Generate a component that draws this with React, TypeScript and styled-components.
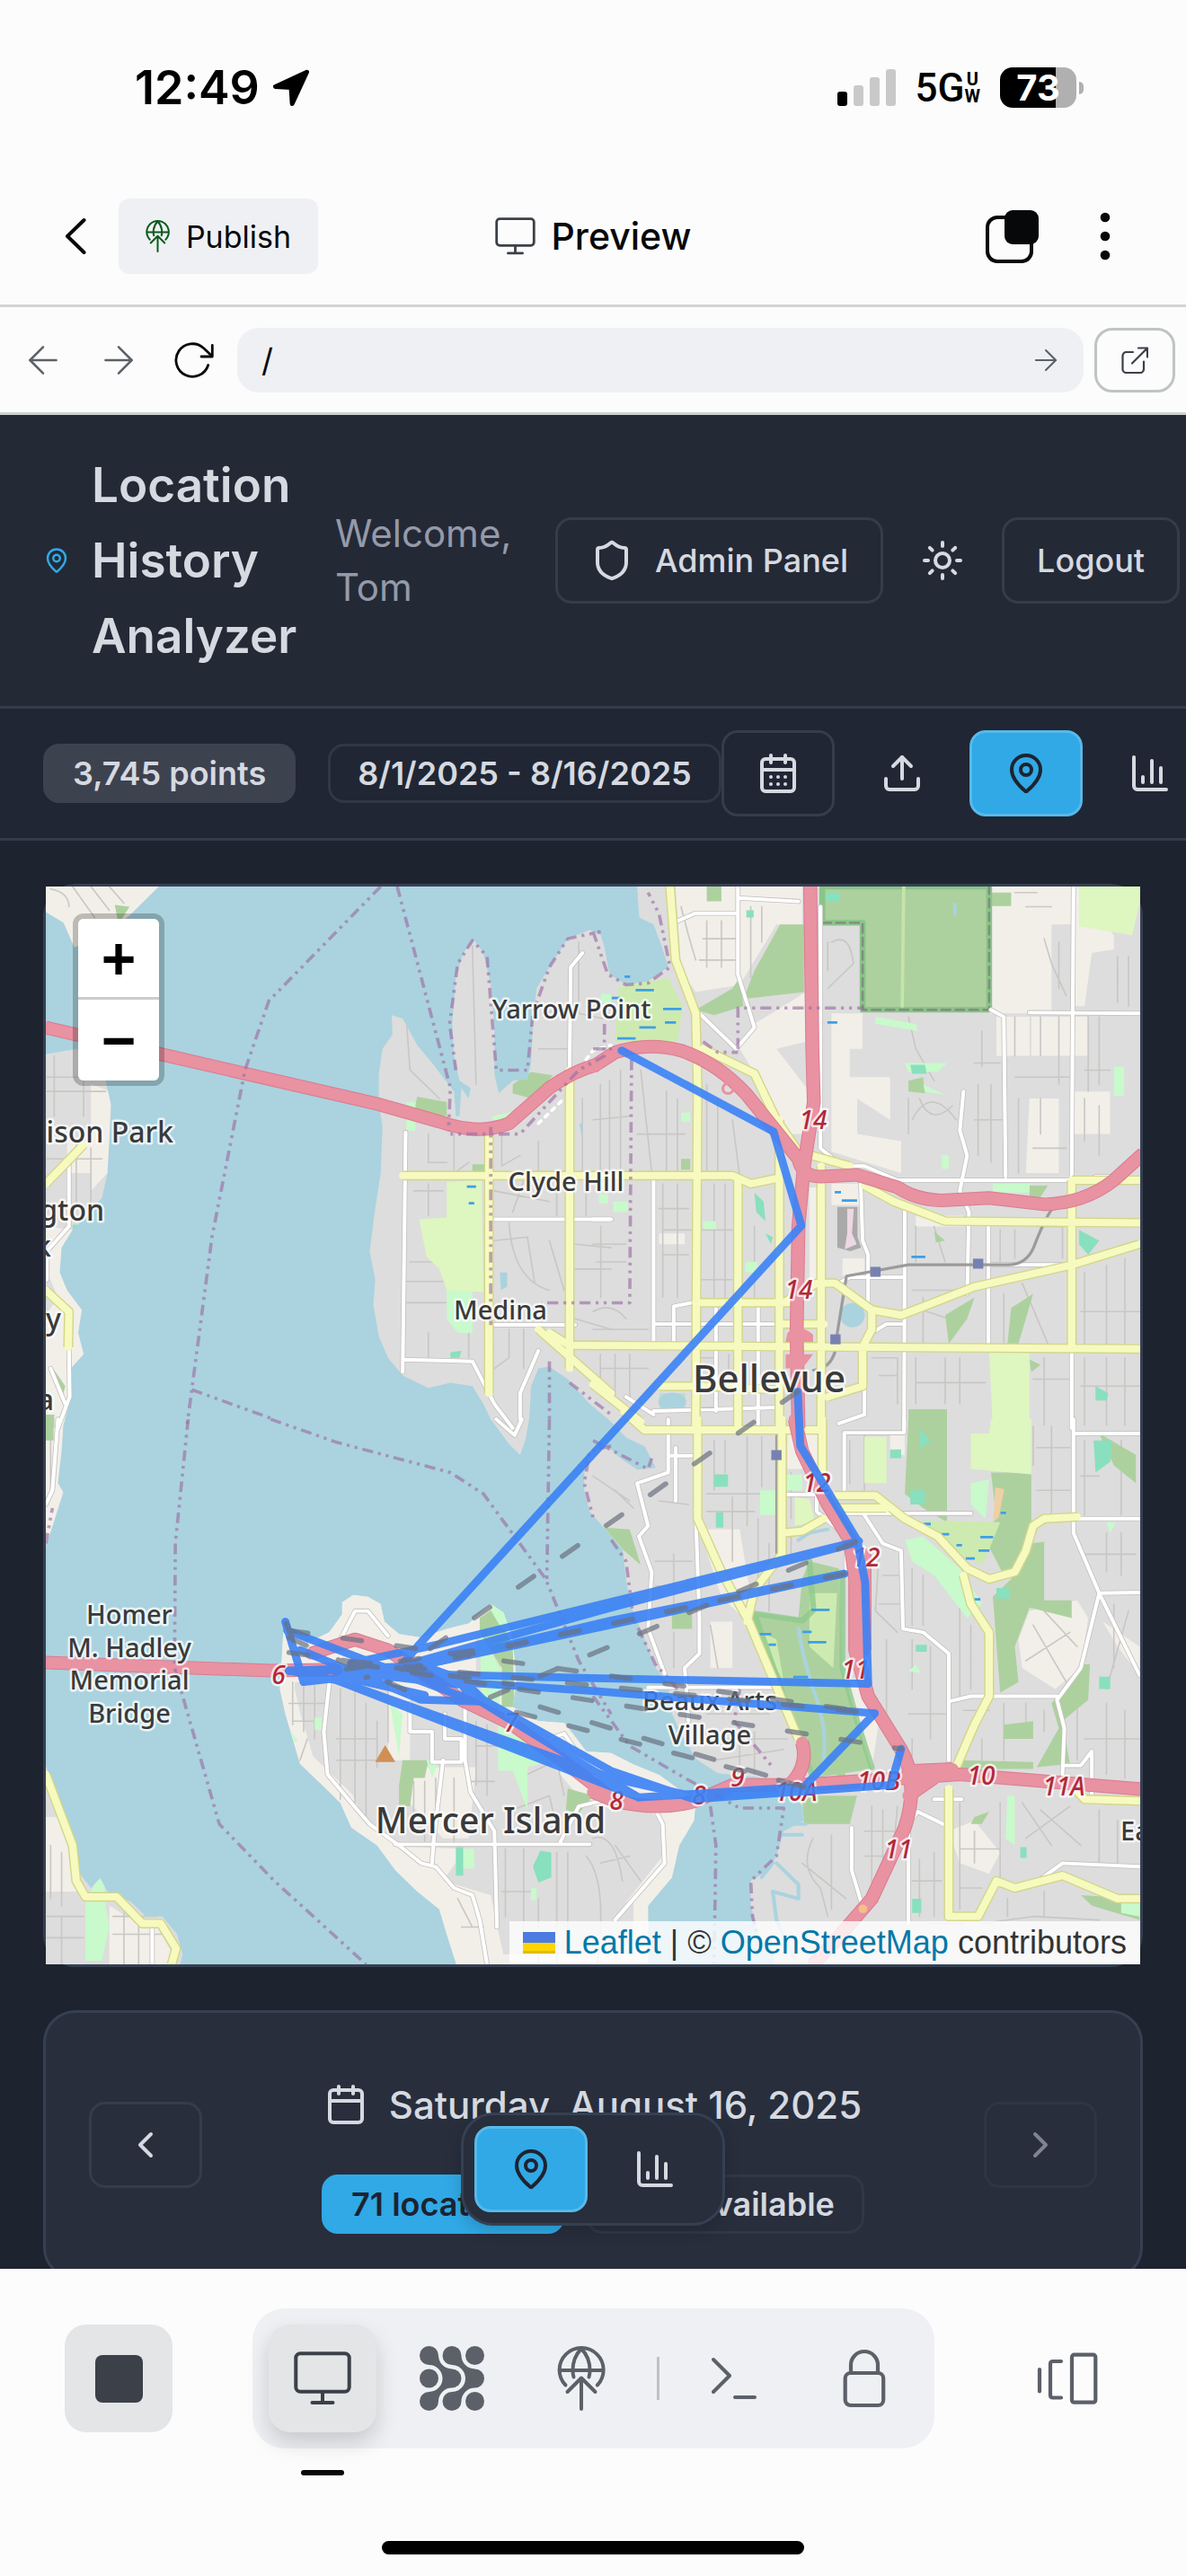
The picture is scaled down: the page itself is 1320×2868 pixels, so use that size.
import React from "react";
import styled, { createGlobalStyle, css } from "styled-components";
import {
  ArrowLeft,
  ArrowRight,
  Calendar,
  CalendarDays,
  ChartColumn,
  ChevronLeft,
  ChevronRight,
  MapPin,
  Shield,
  Sun,
  Upload,
} from "lucide-react";

/* ---------- theme ---------- */

const c = {
  chrome: "#fcfcfd",
  chromeFill: "#eff0f3",
  chromeActive: "#e4e5e7",
  ink: "#07080a",
  slate: "#3c4048",
  grey: "#5c6068",
  rule: "#d4d4d4",
  page: "#1e2330",
  header: "#242936",
  toolbar: "#202633",
  card: "#282e3c",
  line: "#354052",
  softLine: "#363c4a",
  text: "#d5d9e0",
  muted: "#949aa9",
  accent: "#30a9e6",
  accentLine: "#57b9ea",
};

const Global = createGlobalStyle`
  *, *::before, *::after { box-sizing: border-box; }
  body { margin: 0; background: ${c.chrome}; font-family: Inter, "Liberation Sans", sans-serif; }
  button, input { font: inherit; color: inherit; }
  svg { display: block; flex: none; }
`;

/* ---------- phone and browser chrome ---------- */

const Screen = styled.div`
  display: flex;
  flex-direction: column;
  height: 100vh;
  overflow: hidden;
  background: ${c.chrome};
`;

const StatusBar = styled.header`
  display: flex;
  align-items: center;
  justify-content: space-between;
  flex: none;
  height: 187px;
  padding: 8px 114px 0 150px;
  color: #000;
`;

const StatusGroup = styled.div<{ $gap: number }>`
  display: flex;
  align-items: center;
  gap: ${(p) => p.$gap}px;
`;

const Clock = styled.time`
  font-size: 52px;
  line-height: 60px;
  font-weight: 600;
`;

const Network = styled.span`
  display: flex;
  align-items: center;
  font-size: 44px;
  line-height: 48px;
  font-weight: 500;
  font-family: Roboto, sans-serif;
`;

const NetworkStack = styled.span`
  display: flex;
  flex-direction: column;
  align-items: center;
  font-size: 20px;
  line-height: 19px;
  font-weight: 700;
`;

const Battery = styled.span`
  display: flex;
  align-items: center;
  gap: 3px;
  &::after {
    content: "";
    width: 5px;
    height: 14px;
    border-radius: 0 5px 5px 0;
    background: #b0b0b0;
  }
`;

const BatteryBody = styled.span`
  width: 85px;
  height: 45px;
  border-radius: 14px;
  background: linear-gradient(90deg, #000 73%, #b0b0b0 73%);
  color: #fff;
  font-size: 40px;
  line-height: 45px;
  font-weight: 700;
  text-align: center;
`;

const plain = css`
  display: flex;
  align-items: center;
  justify-content: center;
  flex: none;
  padding: 0;
  border: 0;
  background: none;
  cursor: pointer;
`;

const NavBar = styled.nav`
  display: grid;
  grid-template-columns: 1fr auto 1fr;
  align-items: center;
  flex: none;
  height: 155px;
  padding: 0 60px 0 54px;
  border-bottom: 3px solid ${c.rule};
  color: ${c.ink};
`;

const NavSide = styled.div<{ $end?: boolean }>`
  display: flex;
  align-items: center;
  gap: ${(p) => (p.$end ? 44 : 18)}px;
  justify-content: ${(p) => (p.$end ? "flex-end" : "flex-start")};
`;

const NavButton = styled.button`
  ${plain}
  width: 60px;
  height: 84px;
`;

const Publish = styled.button`
  ${plain}
  gap: 18px;
  width: 222px;
  height: 84px;
  border-radius: 12px;
  background: ${c.chromeFill};
  font-size: 34px;
`;

const PublishIcon = styled.span`
  color: #0b5a1c;
`;

const NavTitle = styled.h1`
  display: flex;
  align-items: center;
  gap: 18px;
  margin: 0;
  padding-left: 6px;
  font-size: 41px;
  line-height: 48px;
  font-weight: 500;
  svg {
    color: ${c.slate};
  }
`;

const AddressBar = styled.form`
  display: flex;
  align-items: center;
  flex: none;
  height: 120px;
  padding: 0 12px 0 6px;
  border-bottom: 3px solid #cdd2d0;
  color: ${c.grey};
`;

const AddressButton = styled.button<{ $dark?: boolean }>`
  ${plain}
  width: 84px;
  height: 72px;
  color: ${(p) => (p.$dark ? c.ink : c.grey)};
`;

const AddressField = styled.div`
  display: flex;
  flex: 1;
  min-width: 0;
  height: 72px;
  margin: 0 12px 0 6px;
  border-radius: 24px;
  background: ${c.chromeFill};
`;

const AddressInput = styled.input`
  flex: 1;
  min-width: 0;
  padding: 0 0 0 27px;
  border: 0;
  outline: 0;
  background: none;
  color: ${c.ink};
  font-size: 36px;
`;

const OpenButton = styled.button`
  ${plain}
  width: 90px;
  height: 72px;
  border: 3px solid #bfc4c3;
  border-radius: 20px;
  color: ${c.slate};
`;

/* ---------- the previewed site ---------- */

const Preview = styled.main`
  position: relative;
  flex: 1;
  min-height: 0;
  overflow: hidden;
  background: ${c.page};
  color: ${c.text};
`;

const SiteHeader = styled.header`
  display: flex;
  align-items: center;
  padding: 36px 0 36px 48px;
  border-bottom: 3px solid #353b4c;
  background: ${c.header};
`;

const Brand = styled.div`
  display: flex;
  align-items: center;
  flex: none;
  gap: 24px;
  width: 325px;
  color: ${c.accent};
`;

const BrandName = styled.h2`
  margin: 0;
  width: min-content;
  color: ${c.text};
  font-size: 53px;
  line-height: 84px;
  font-weight: 600;
`;

const Welcome = styled.p`
  flex: none;
  width: 245px;
  margin: 0;
  padding-right: 48px;
  color: ${c.muted};
  font-size: 42px;
  line-height: 60px;
`;

const ButtonRow = styled.div`
  display: flex;
  align-items: center;
  flex: none;
  gap: 12px;
`;

type Tone = "outline" | "ghost" | "accent";

const tones = {
  outline: css`
    border-color: ${c.softLine};
  `,
  ghost: css`
    border-color: transparent;
  `,
  accent: css`
    border-color: ${c.accentLine};
    background: ${c.accent};
    color: ${c.page};
  `,
};

const Button = styled.button<{ $tone: Tone; $width?: number }>`
  display: flex;
  align-items: center;
  justify-content: center;
  flex: none;
  gap: 24px;
  width: ${(p) => (p.$width ? `${p.$width}px` : "auto")};
  height: 96px;
  padding: 0 36px;
  border: 3px solid;
  border-radius: 18px;
  background: none;
  color: ${c.text};
  font-size: 36px;
  font-weight: 500;
  white-space: nowrap;
  cursor: pointer;
  ${(p) => tones[p.$tone]}
  &:disabled {
    opacity: 0.5;
  }
`;

const Toolbar = styled.div`
  display: flex;
  align-items: center;
  height: 147px;
  padding-left: 48px;
  border-bottom: 3px solid #353b4c;
  background: ${c.toolbar};
`;

const BadgeRow = styled.div<{ $gap: number }>`
  display: flex;
  flex: none;
  gap: ${(p) => p.$gap}px;
`;

const badgeTones = {
  soft: css`
    border-color: transparent;
    background: #3d424f;
    background-clip: border-box;
  `,
  outline: css`
    border-color: #313745;
  `,
  accent: css`
    border-color: ${c.accent};
    background: ${c.accent};
    color: ${c.page};
  `,
};

const Badge = styled.span<{ $tone: "soft" | "outline" | "accent" }>`
  flex: none;
  height: 66px;
  padding: 0 30px;
  border: 3px solid;
  border-radius: 18px;
  font-size: 36px;
  line-height: 60px;
  font-weight: 600;
  white-space: nowrap;
  ${(p) => badgeTones[p.$tone]}
`;

const Content = styled.div`
  display: flex;
  flex-direction: column;
  gap: 48px;
  padding: 48px;
`;

const MapFrame = styled.section`
  position: relative;
  border: 3px solid ${c.line};
  border-radius: 36px;
`;

const MapArt = styled.svg`
  width: 100%;
  height: auto;
`;

const ZoomControl = styled.div`
  position: absolute;
  top: 30px;
  left: 30px;
  display: flex;
  flex-direction: column;
  border: 6px solid rgba(0, 0, 0, 0.22);
  border-radius: 12px;
  background-clip: padding-box;
`;

const ZoomButton = styled.button`
  ${plain}
  width: 90px;
  height: 90px;
  background: #fff;
  color: #000;
  font: bold 66px/84px "Liberation Sans", sans-serif;
  &:first-child {
    border-bottom: 3px solid #ccc;
    border-radius: 6px 6px 0 0;
  }
  &:last-child {
    border-radius: 0 0 6px 6px;
  }
`;

const Attribution = styled.footer`
  position: absolute;
  right: 0;
  bottom: 0;
  display: flex;
  align-items: center;
  gap: 10px;
  height: 48px;
  padding: 0 15px;
  background: rgba(255, 255, 255, 0.8);
  color: #333;
  font: 36px/48px "Liberation Sans", sans-serif;
  a {
    color: #0078a8;
    text-decoration: none;
  }
`;

const Flag = styled.svg`
  width: 36px;
  height: 24px;
`;

const DayCard = styled.section`
  display: flex;
  align-items: center;
  justify-content: space-between;
  padding: 48px;
  border: 3px solid ${c.line};
  border-radius: 36px;
  background: ${c.card};
`;

const DayInfo = styled.div`
  display: flex;
  flex-direction: column;
  align-items: center;
  gap: 24px;
`;

const DayTitle = styled.h3`
  display: flex;
  align-items: center;
  gap: 24px;
  height: 108px;
  margin: 0;
  font-size: 42px;
  font-weight: 500;
`;

const FloatingSwitch = styled.div`
  position: absolute;
  bottom: 48px;
  left: 50%;
  display: flex;
  gap: 12px;
  padding: 12px;
  border: 3px solid ${c.line};
  border-radius: 36px;
  background: ${c.card};
  box-shadow: 0 6px 18px rgba(0, 0, 0, 0.16);
  transform: translateX(-50%);
`;

/* ---------- bottom bar ---------- */

const Dock = styled.footer`
  display: flex;
  flex-direction: column;
  align-items: center;
  flex: none;
  padding: 44px 0 24px;
`;

const DockRow = styled.div`
  display: flex;
  align-items: center;
  justify-content: space-between;
  width: 100%;
  padding: 0 72px;
  color: ${c.grey};
`;

const DockGroup = styled.div`
  display: flex;
  align-items: center;
  gap: 24px;
  padding: 18px;
  border-radius: 36px;
  background: ${c.chromeFill};
`;

const DockButton = styled.button<{ $filled?: boolean; $active?: boolean }>`
  ${plain}
  position: relative;
  width: 120px;
  height: 120px;
  border-radius: 24px;
  ${(p) =>
    (p.$filled || p.$active) &&
    css`
      background: ${c.chromeActive};
      color: ${c.slate};
    `}
  ${(p) =>
    p.$active &&
    css`
      box-shadow: 0 12px 24px rgba(0, 0, 0, 0.16);
      &::after {
        content: "";
        position: absolute;
        bottom: -48px;
        left: 36px;
        right: 36px;
        height: 6px;
        border-radius: 3px;
        background: ${c.ink};
      }
    `}
`;

const StopSquare = styled.span`
  width: 53px;
  height: 53px;
  border-radius: 8px;
  background: ${c.slate};
`;

const DockDivider = styled.span`
  width: 3px;
  height: 48px;
  background: #bfc1c5;
`;

const HomeBar = styled.div`
  width: 470px;
  max-width: 60%;
  height: 15px;
  margin-top: 103px;
  border-radius: 8px;
  background: #000;
`;

/* ---------- icons ---------- */

const line = {
  fill: "none",
  stroke: "currentColor",
  strokeLinecap: "round" as const,
  strokeLinejoin: "round" as const,
};

const GlobeUp = ({ width, height }: { width: number; height: number }) => (
  <svg width={width} height={height} viewBox="0 0 54 72" {...line} strokeWidth={4}>
    <path d="M9.5 43.5A24.5 24.5 0 1 1 44.8 43.5M2.5 27H51.5M27 3C20 10 17.500 18 17.500 27Q17.500 31 18.500 34.500M27 3C34 10 36.500 18 36.500 27Q36.500 31 35.500 34.500" />
    <path d="M11.500 51 27 35.500 42.500 51M27 36V70" />
  </svg>
);

const Monitor = ({ width, height }: { width: number; height: number }) => (
  <svg width={width} height={height} viewBox="0 0 64 60" {...line} strokeWidth={4}>
    <rect x="2.300" y="2.300" width="59.400" height="42.500" rx="5" />
    <path d="M32 45V57M20.500 57H43.500" />
  </svg>
);

const Reload = () => (
  <svg width="45" height="40" viewBox="0 0 45 40" {...line} strokeWidth={2.8}>
    <path d="M37.700 25.500A18.300 18.300 0 1 1 32.500 6.500L42 15.500M42.300 3.500V16H30" />
  </svg>
);

const OpenOut = () => (
  <svg width="30" height="30" viewBox="0 0 30 30" {...line} strokeWidth={2.2}>
    <path d="M13 6H5.500A4 4 0 0 0 1.500 10V25A4 4 0 0 0 5.500 29H21A4 4 0 0 0 25 25V16.500M12 18.500 29 1.500M19 1.500H29V11.500" />
  </svg>
);

const Duplicate = () => (
  <svg width="59" height="59" viewBox="0 0 59 59">
    <rect x="2" y="8" width="49" height="49" rx="11" fill="none" stroke="currentColor" strokeWidth="4" />
    <rect x="21" y="0" width="38" height="38" rx="9" fill="currentColor" />
  </svg>
);

const Dots = () => (
  <svg width="12" height="54" viewBox="0 0 12 54" fill="currentColor">
    <circle cx="6" cy="6" r="5.300" />
    <circle cx="6" cy="27" r="5.300" />
    <circle cx="6" cy="48" r="5.300" />
  </svg>
);

const Back = () => (
  <svg width="24" height="42" viewBox="0 0 24 42" {...line} strokeWidth={4}>
    <path d="M21.500 3 3 21 21.500 39" />
  </svg>
);

const Locator = () => (
  <svg width="42" height="42" viewBox="0 0 42 42" {...line} fill="currentColor" strokeWidth={5}>
    <path d="M38.500 3.200 3.500 19.500 21 20.500 22.200 38.500Z" />
  </svg>
);

const Signal = () => (
  <svg width="65" height="41" viewBox="0 0 65 41">
    <rect y="25" width="11" height="16" rx="3" />
    <rect x="18" y="18" width="11" height="23" rx="3" fill="#c9c9c9" />
    <rect x="36" y="9" width="11" height="32" rx="3" fill="#c9c9c9" />
    <rect x="54" y="0" width="11" height="41" rx="3" fill="#c9c9c9" />
  </svg>
);

const blob =
  "M10.500 0A10.500 10.500 0 0 1 21 10.500A15 15 0 0 0 36 25.500A10.500 10.500 0 0 1 36 46.500A15 15 0 0 0 21 61.500A10.500 10.500 0 1 1 10.500 51A15 15 0 0 0 10.500 21A10.500 10.500 0 0 1 10.500 0Z";

const Mesh = () => (
  <svg width="72" height="72" viewBox="0 0 72 72" fill="currentColor">
    <path d={blob} />
    <path d={blob} transform="translate(25.500 0)" />
    <circle cx="10.500" cy="36" r="10.500" />
    <circle cx="61.500" cy="10.500" r="10.500" />
    <circle cx="61.500" cy="61.500" r="10.500" />
  </svg>
);

const Prompt = () => (
  <svg width="52" height="52" viewBox="0 0 52 52" {...line} strokeWidth={4}>
    <path d="M2 5 20 23 2 41M26 47H48" />
  </svg>
);

const Padlock = () => (
  <svg width="50" height="68" viewBox="0 0 50 68" {...line} strokeWidth={4.2}>
    <rect x="3.700" y="28" width="42.500" height="36" rx="6" />
    <path d="M10 28V19A15 15 0 0 1 40 19V28" />
  </svg>
);

const Stack = () => (
  <svg width="68" height="58" viewBox="0 0 68 58" {...line} strokeWidth={4.2}>
    <path d="M3 19V43.500M27 10H18Q15 10 15 13V47.500Q15 50.500 18 50.500H27" />
    <rect x="39" y="2.700" width="26.300" height="53" rx="2.500" />
  </svg>
);

/* ---------- map ---------- */

/* Survey units: each sheet of the map has its own origin. */
const origin = { nw: "0 0", ne: "1519 0", sw: "0 1543", se: "1519 1543" };
type SheetId = keyof typeof origin;
type Sheets = Record<SheetId, string>;

const Sheet = ({ paths, ...rest }: { paths: Sheets } & Omit<React.SVGProps<SVGPathElement>, "paths">) => (
  <>
    {(Object.keys(origin) as SheetId[]).map((id) => (
      <path key={id} d={paths[id]} transform={`translate(${origin[id]})`} {...rest} />
    ))}
  </>
);

const eastShore =
  "M1639 43L1645 130 1684 150 1709 220 1724 270 1669 310 1609 320 1564 290 1549 210 1540 180 1510 165 1450 190 1400 270 1365 330 1355 430 1350 540 1340 585 1300 590 1262 625 1250 570 1250 430 1240 320 1220 230 1195 195 1165 230 1145 300 1135 430 1140 520 1155 590 1185 610 1180 640 1160 610 1155 690 1145 690 1140 620 1080 540 1040 490 1000 415 970 405 972 460 945 500 935 570 935 650 945 720 940 850 925 950 910 1070 925 1150 920 1220 935 1310 960 1370 1000 1420 1070 1455 1130 1440 1190 1450 1220 1500 1240 1543 1290 1613 1320 1643 1335 1600 1345 1540 1350 1450 1370 1400 1400 1395 1450 1430 1510 1500 1568 1550 1610 1595 1660 1620 1690 1680 1640 1685 1590 1650 1560 1620 1510 1633 1495 1693 1495 1743 1510 1803 1550 1850 1600 1910 1609 1993 1620 2063 1660 2163 1690 2243 1725 2290 1730 2363 1760 2430 1800 2500 1860 2540 1960 2550 2040 2570 2090 2633 2094 2673 2039 2703 2019 2773 1999 2813 1949 2843 1949 2913 1969 2993 2009 3043 2019 3090H3020V43Z";
const mercer =
  "M675 2133L740 2173 800 2143 835 2093 835 2058 865 2038 905 2043 940 2063 950 2113 990 2148 1050 2158 1120 2133 1180 2118 1240 2063 1275 2088 1300 2163 1310 2283 1300 2353 1370 2393 1440 2398 1475 2443 1500 2478 1568 2483 1630 2515 1700 2545 1799 2620 1794 2673 1754 2743 1734 2833 1669 2913 1669 3090H1150L1120 2993 1100 2923 1040 2873 980 2813 930 2743 860 2693 830 2623 780 2573 720 2513 700 2443 680 2373 665 2303Z";
const westLand =
  "M27 43H335L255 125 190 170 105 215 75 145 27 115ZM27 515L110 500 170 540 190 590 205 660 200 760 195 850 180 920 130 980 100 1010 70 1060 65 1130 85 1180 125 1235 115 1300 130 1360 95 1400 90 1500 75 1560 70 1633 60 1723 75 1750 40 1860 27 1900ZM27 2518L60 2613 110 2743 120 2823 150 2863 175 2835 195 2873 260 2903 300 2943 345 2943 385 2993 400 3050 390 3090H27Z";

const beige: Sheets = {
  nw: "M27 43H335L255 125 190 170 105 215 75 145 27 115ZM150 600L205 620 200 760 195 850 150 900ZM85 760H150V850H85ZM27 1000L100 1010 70 1060 65 1130 85 1180 125 1235 130 1360 95 1400 90 1500 75 1560H27V1250L60 1200 27 1120Z",
  ne: "M225 43H570V150H500L400 320 280 340 240 280ZM310 130H390V270H310ZM440 430L580 340V480L500 500 590 620V740L540 740 400 500ZM640 400H735V500H700V580H810V700L720 640V740L840 760V850L650 790V400ZM1080 43H1310V150H1250V400H1080ZM1310 43H1320L1420 180V220L1360 230 1340 380H1310ZM1100 410H1190V520H1100ZM1195 410H1350V520H1195ZM1190 640H1270V850H1180ZM1310 620H1410V740H1310ZM590 890H620V1150H590ZM650 880H730V940H650ZM680 1090H740V1140H680ZM180 1020H250V1050H180ZM880 970H1010V1000H880Z",
  sw: "M27 0H75L70 90 60 180 75 200 40 320 27 350ZM27 1120L60 1120 110 1270V1330H27ZM200 1370L280 1420 330 1430 370 1500V1535H200ZM840 520H930L980 610 1200 600V780H1020V960H960V740H700V640ZM1010 980H1200L1180 1180 1110 1180 1000 1060ZM930 1200L1170 1210 1110 1300 1240 1340 1280 1535H1150L1100 1380ZM1290 830H1440L1490 940H1568V1100L1470 1050Z",
  se: "M530 30H620V140H530ZM290 310H400L430 500 410 560 350 500ZM320 570H380V700H320ZM810 40H850V100H810ZM0 940L110 975 280 1075 275 1130 235 1200 215 1290 150 1370 90 1360 190 1230 185 1130 140 1090 0 1090ZM1190 540L1320 510 1350 560 1330 700 1260 760 1170 700 1160 620ZM700 730H740L780 850 760 980 700 830ZM970 1160L1040 1130 1110 1220 1080 1280 1000 1250ZM1390 570L1490 640V720L1430 640ZM590 1080H700V1130H590Z",
};

const forest: Sheets = {
  nw: "M1040 635L1120 650V690L1030 675ZM1300 600L1350 565 1410 575 1350 640 1300 625ZM1190 825H1225V850H1190ZM215 95L255 100 225 150ZM27 1530H50V1568H27ZM40 1390L80 1450 75 1470Z",
  ne: "M625 43H1080V390H735V145H625ZM1085 60H1140V98H1085ZM510 150H575V340L410 360 440 280ZM280 390L380 330 400 300 410 380 330 405ZM310 43H350V85H310ZM860 590L900 580 905 625 860 620ZM240 810H265V840H240ZM860 1515H965V1568H860ZM960 1250L1040 1200 1020 1260 970 1330ZM1140 1230L1200 1190 1160 1330 1130 1330ZM930 1015L960 1040 935 1045ZM1190 885H1240L1215 925H1190ZM1190 1375L1220 1390 1195 1410Z",
  sw: "M27 0H48V60H27ZM1210 560L1250 530 1300 640 1305 810 1270 810 1270 700 1210 600ZM1000 960H1070L1060 1010H1030L1020 1090H990V1030ZM1450 1040L1520 1060 1480 1110 1445 1100Z",
  se: "M590 400L670 420 680 700 720 850 760 985 600 1010 560 900 500 760 430 590 440 545 560 560 570 450ZM860 0H965V290L900 250 850 210ZM1085 150H1195V430L1120 440 1060 320 1100 280ZM30 305L100 310 130 410 85 370ZM215 540H270V590H215ZM1190 350L1230 345V510H1305V560L1190 530 1150 640 1160 740 1110 770 1090 500 1140 450ZM1330 690L1355 690 1350 790 1280 850 1300 970 1210 980 1270 870 1250 800ZM1120 860L1200 850V900H1120ZM1040 1120L1080 1105 1060 1140 1030 1140ZM570 1060H720L700 1140H575ZM1330 1340L1490 1350V1410L1360 1370ZM1000 960L1200 965V985H1000ZM620 990L680 970 690 1010ZM1380 40L1480 100V180L1420 130Z",
};

const mint: Sheets = {
  nw: "M1120 1180H1190V1300H1150L1120 1260ZM1245 690L1305 675V700H1245ZM1010 650H1035V730H1010ZM1540 345H1568V370H1540ZM1535 910H1560V935H1535Z",
  ne: "M770 410L880 430 885 450 770 430ZM850 540H965L940 565H860ZM900 600L960 630 905 620ZM1420 550H1448V632H1420ZM1090 880H1190V905H1090ZM300 985H335V1008H300ZM950 800H970V838H950ZM415 1100H448V1130H415ZM240 680H265V705H240ZM55 930H95V960H55Z",
  sw: "M1210 600L1265 700V800H1215ZM1230 520L1275 540 1300 600 1270 590ZM1260 860L1410 960 1340 980V1100L1300 990H1260ZM965 800L1000 830 990 950ZM1145 1210H1195V1265H1145ZM135 1360L165 1300 185 1290 190 1370 200 1430 180 1525H135ZM1065 960H1100L1080 1010ZM760 840H780V875H760ZM695 880L715 905 705 910ZM1350 1320H1365V1355H1350Z",
  se: "M850 340L900 330 1000 420 1060 520 1020 560 930 440 870 400ZM1030 180L1080 170 1070 280 1030 240ZM455 200H498V270H455ZM525 155H570V200H525ZM1130 1060H1150V1200L1125 1180ZM860 710L880 690 895 715ZM1390 640ZM1440 1360H1490V1400L1440 1390ZM1400 290H1425L1410 320Z",
};

const golf: Sheets = {
  nw: "M1120 875L1215 870 1220 1185 1120 1180 1100 1120 1065 1085 1045 980 1120 975Z",
  ne: "M1325 43H1490V90L1470 180 1325 155ZM1080 1355H1190V1568H1090Z",
  sw: "",
  se: "M1085 0H1195V155L1030 140V40H1080ZM740 50H800V180H740ZM550 220L590 225 605 290 550 300Z",
};

const marsh: Sheets = {
  nw: "",
  ne: "M70 325L205 300 245 380 230 480 60 480Z",
  sw: "",
  se: "M900 285L1110 290 1075 380 1060 410 1000 380ZM590 490L665 490 655 700 590 640ZM440 590L500 620 520 740Z",
};

const sport: Sheets = {
  nw: "M1130 1355L1160 1350 1155 1370H1130ZM100 995H122V1015H100Z",
  ne: "M1325 1010L1380 1040 1350 1080 1325 1050ZM470 1020L490 1030 485 1050ZM440 905L465 930 470 985 445 960ZM1370 1450L1405 1470 1400 1490H1370ZM865 545L905 545 910 570H870ZM635 60H672V85H635ZM418 110H438V130H418Z",
  sw: "M1375 1215L1405 1220V1290L1370 1305 1355 1260ZM1145 1205H1165V1285H1145Z",
  se: "M890 25L920 60 890 85ZM1365 60H1415L1410 120 1370 150ZM865 200H905V240H865ZM1380 725H1410V760H1380ZM1100 475H1135V505H1100ZM330 155H368V190H330ZM335 262H355V305H335ZM880 635H910V655H880ZM810 85H840V110H810ZM870 1350H895V1390H870ZM1165 1205H1182V1235H1165Z",
};

const lanes: Sheets = {
  nw: "M40 50Q90 60 90 100M100 43L160 130M150 43L200 110M200 43L240 90M30 580H190M30 620H190M50 520V690M130 520V690M30 810H180M110 770V940M150 780V940M1010 420L1020 560 1100 640M1190 210L1200 600M1380 400L1470 380M1370 500H1450M1480 200V400L1568 420M1490 640V850M1070 740V820H1120M1140 740V850L1180 820M1030 900H1110M1070 880V970M1020 1100H1110M1010 1155H1120M1010 1215H1120M1070 1300V1370M1180 1300V1370M1270 740V830L1320 800M1370 760V850M1250 900L1400 930M1330 870L1300 960M1420 870V970M1250 1040L1340 1030 1360 1160M1290 990Q1300 1150 1400 1180M1400 1040L1440 1180M1290 1290V1370L1250 1400M1330 1290V1400M1380 1290V1230M1470 1050L1568 1060M1470 1120H1568M1500 880V970M1540 1000V1200M1470 1260L1568 1290",
  ne: "M20 600V840M45 590V840M75 560V840M130 560L160 850M200 620V850M230 640V850M0 700L100 690M120 740H250M310 600V850M340 640V850M380 700L400 860M0 1050H90M10 1100H90M0 1240Q50 1210 90 1260M0 1290H150M190 880V1200M230 880V1200M330 880V1200M360 880V1200M440 1000V1200M180 950H260M190 1010H380M190 1080H260M290 1150H380M240 100L260 180 280 250M310 140V270M350 140V270M300 190H390M290 250H390M430 100V300M460 100V200M650 200Q700 170 710 260L640 330M640 200V280M860 410L880 500 930 590M870 700Q920 600 990 700M860 640V740M890 640Q920 720 980 660M1040 540H1110M1060 450V550M1050 600V800M1085 600V820M1040 700H1120M1150 60H1210M1180 100H1250M1230 190L1250 260 1290 350M1270 200V330M1150 410V520M1220 410V520M1270 410V600M1150 580H1300M1160 640V850M1220 640V740M1200 780H1290M1350 410V620M1380 410V600M1430 240V370M1460 240V380M1340 560H1410M1340 640V760M1380 660V800M880 1000V1100M930 1000L960 1100M1110 1010V1100M1150 1010V1090M1210 1000H1280V1090M870 1180H1010M880 1230L1000 1270M900 1200V1330M1120 1190V1330M1170 1160L1240 1330M1340 1130V1330M1400 1110V1330M1450 1090V1330M1330 1240H1490M760 1370H830V1500M780 1420H830M880 1370V1500M960 1370V1500M1000 1370V1500M880 1440H1070M1200 1430H1300M1230 1370V1560M1340 1370V1560M1400 1370V1560M1450 1370V1560M1330 1450H1490M20 1360V1440M60 1360V1500M100 1360V1480M290 1370H330M370 1360V1440M20 1400H150",
  sw: "M700 740V860M730 740V880M760 750V900M690 800H790M700 850H780M830 760V1070M870 760V1100M900 800V1130M930 850V980M960 740V910M820 900H930M820 960H960M740 900L720 960M1030 1020V1160M1060 1020V1190M1090 1010V1180M1140 1010V1200M1200 850V1030M1230 860V1060M1200 920H1290M1300 1100L1400 1060 1420 1150M1340 1000L1420 960 1440 1060M1280 1210V1400M1330 1210V1500M1370 1350V1535M1420 1220V1535M1270 1330H1350M1450 1220V1500M1500 1230Q1560 1300 1530 1535M1180 1020H1250M1150 1350L1190 1430M1160 1430H1220M40 1200V1350M70 1220V1370M30 1400H130M30 1460H130M70 1400V1535M210 1400H330M210 1450H360M240 1390V1535M280 1430V1535M40 20V200",
  se: "M330 60V200M360 60V150M420 50V300M460 50V190M310 210H500M310 260H440M380 220V400M450 280V450M540 330V380M480 350V540M180 230L260 240M60 200L110 250M0 160L100 230M170 400H270M170 470H280M220 380V540M220 600V700M320 580L340 700M300 740H470M310 830H480M400 880V1000M440 880V1000M350 900H530M330 960L520 930M540 150V280M590 140V200M700 60V180M740 40V200M1200 20V130M1250 20V290M1210 80H1300M1210 200H1300M1340 60V270M1440 60V270M1330 160H1380M1000 530V700M870 420V580M900 440V580M780 370L770 540 830 600M790 440H840M780 520H840M800 620V830M870 620V760M920 640V900M860 830H960M870 900V950M1000 660V780M1030 580V760M1200 580L1290 740M1230 540L1320 640M1180 680L1300 600M1400 320V430M1440 320V440M1330 380H1480M1420 520V700M1460 540L1400 760M1010 820H1080M1060 900V970M1120 800V960M1180 800V850M1230 820V880M1320 800V960M1400 800V1000M1450 820V1010M1340 900H1490M1000 1080V1380M1040 1160V1250M1110 1080V1290M1170 1080L1250 1200M1220 1100L1330 1200M1180 1180L1300 1090M1380 1100V1250M1430 1130V1260M1000 1210H1110M1000 1320H1060M760 1090V1330M790 1100V1260M830 1090L820 1200M740 1160H820M740 1230H820M600 1180Q560 1260 620 1320L640 1400M650 1170V1380M570 1250L690 1350M0 1180Q60 1160 80 1300M20 1250L100 1230M60 1200L130 1300M890 1240V1400M930 1220V1400M870 1300H950M910 1420H1010M1060 1420L1200 1400 1380 1410M1130 1350V1400M1230 1330V1400",
};

const streets: Sheets = {
  nw: "M1008 735L1000 1410M1000 1375L1190 1380 1250 1500 1300 1568M1320 1543V1470L1370 1350M1245 980H1568M1235 1277H1470M1455 560L1458 270 1490 230M90 820V1000L30 1070V1150M90 1340L92 1480 60 1568M40 1400L80 1500",
  ne: "M395 43V290L440 440 390 500 290 400M395 75L560 85M395 118H280L230 140M1310 43L1305 870M1085 390L1120 410 1125 860M1190 398L1490 400M620 100V780L680 830H740L830 870H1300M1490 790L1420 860H1370M1010 620L1000 730 1020 800 1000 900 1025 960 1020 1190M1078 990V1335M850 950L848 1568M730 880L735 1040 750 1080V1220M165 870V1330M165 1275H500M220 1330V1225L270 1215M335 1230V1520M450 1230V1568M165 1520L500 1510M740 1360V1530L670 1555M1080 1108H1300M660 1165L700 1143H850M1305 1340V1568M0 980H50M760 1300L800 1275H850M90 1480L165 1530",
  sw: "M60 0L45 200 27 240M1255 0L1305 45 1325 0M800 740L785 880 795 1000 860 1080 910 1140 990 1200 1050 1250 1090 1260 1140 1320 1190 1340 1210 1410 1230 1535M980 1197H1510M1080 1250L1085 1180 1110 960M1170 800V960L1185 1050 1250 1160 1257 1430M1080 965V880H1020V800M1080 965H1160V900H1115V830M1400 900L1440 885 1470 930M820 640L870 540H905L960 610M1430 1190L1480 1090 1540 1075M317 1430V1535",
  se: "M848 0V38H685V200M1310 0V320L1380 490 1490 720M1380 490L1330 700 1265 790 1285 870 1280 1000M970 795L1030 780H1265M740 270L790 350 840 370 845 590 900 600 970 660V960M1310 40H1490M1310 280H1490M1380 490L1490 488M205 0V150L120 180 150 300 125 330 160 430 150 590 200 730M280 270L290 560V660L250 700 260 850M690 350V430M860 1140L885 1105 955 1140M860 1160V1420M705 1150V1270L740 1390M690 265H1030M1200 1310L1280 1250 1490 1260M160 1080L190 1140 195 1250 60 1410M1280 975H1330L1360 935V1060M225 80V230M205 103H285M525 212H610V260L680 320M930 1070H1005M150 755H490",
};

const avenues: Sheets = {
  nw: "M1235 720V1470M1455 560V1400M1000 857H1530M1370 1290L1568 1470M1400 1300L1455 1335H1530M130 770L27 880M27 1180L90 1240 88 1340",
  ne: "M210 43L225 250 280 400 285 600 280 1568M300 500L440 570 500 700 560 790 700 830M0 857H380L430 880 500 865M395 870V1568M280 1215H520L610 1160H660L760 1235 840 1250 1040 1170 1300 1110 1490 1050M508 700V1568M622 830V1568M510 1275H630M760 1235V1290L735 1340V1450L640 1480M180 1450H300L500 1460M740 885L820 930 960 985 1490 990M1305 870V1340M1305 870H1490M0 1335L1490 1345M0 1445L130 1550M560 1215H500",
  sw: "M27 1000L100 1200 110 1300 135 1345H220L290 1420H340L382 1490 370 1535",
  se: "M85 -20L140 30H620M285 0V280L350 430 425 570 560 900M515 0V380L440 480 420 570M625 0V200M520 320L570 315 630 280M660 215H770L850 280 940 330 1020 420 1080 450 1150 430 1180 370 1200 300 1230 280 1320 275M660 250H800M1010 440L1030 520 1080 600V780L1040 860 990 980M970 1040V1400H1050L1100 1300 1150 1320 1280 1285 1430 1350H1490M1000 1000L1300 1025 1340 1070 1490 1075",
};

const motorways: Sheets = {
  nw: "M27 440L340 515 930 655 1100 705Q1210 745 1290 710L1400 610Q1470 560 1530 545",
  ne: "M0 550L60 510Q150 480 240 505 340 540 420 630L560 810Q570 860 620 860L720 855 830 890Q880 925 950 927L1080 920 1230 938Q1340 935 1420 870L1500 795M592 43L598 500 602 650 575 830 560 1000 555 1300 560 1568",
  sw: "M27 685L640 708 820 705M750 660L870 620 960 650 1160 790 1300 860 1460 980 1560 1060",
  se: "M0 1050L60 1075Q180 1105 280 1075L380 1030 560 1030 860 1010 1000 1000 1500 1042M550 0L570 90 640 240 700 340 715 450V650L750 780 840 930Q890 1020 850 1150L760 1350 650 1480 600 1535M740 380V650M570 910Q590 980 530 1035M870 990L980 985M860 1060L930 1010",
};

const boundaries: Sheets = {
  nw: "M940 43L635 365 570 560 480 1030 425 1460 412 1560M425 1460L640 1540M985 43L1130 610 1125 730M1400 1380V1543M1455 1440L1568 1530M1550 430V520L1480 560 1320 740H1130M1240 720V1280M1145 560L1128 430 1150 260 1190 195 1230 240 1255 560H1340L1355 400 1400 270 1450 190 1540 170",
  ne: "M0 170L40 290 90 320 150 315 210 270 180 120 150 60M105 530L100 1215H-140M395 500V385H740M0 500L60 500M300 480L340 510H395",
  sw: "M415 0L380 350 378 700 500 1140 650 1300 900 1535M640 0L820 65 1130 150 1220 210 1390 450 1480 680 1568 830M1400 0L1393 450M1568 75L1510 90 1495 180 1520 280M27 350L45 250",
  se: "M0 780L100 920 250 1010 400 1095H520L500 1230 430 1300 435 1400 460 1500M320 1090L335 1200 330 1535M50 340L90 400 110 560 170 690 230 760M0 60L150 140 160 110M400 760L385 850 490 980",
};

const creeks =
  "M2079 1883L2109 1863 2159 1853M2079 2133Q2089 2203 2119 2303 2169 2433 2139 2543M2019 2793L2079 2853 2079 2893 2009 2873 2019 2953 2069 3063M2029 2683H2099M2029 2713H2089M1979 2833L2009 2793";

const wetDashes =
  "M1635 335H1685M1570 357H1595M1710 388H1760M1715 426H1745M1645 440H1690M1585 471H1635M1605 297H1620M2158 426H2185M2197 927H2239M2178 904H2195M2387 1086H2425M1175 888H1200M1180 935H1195M2114 2080H2164M2090 2142H2115M2105 2171H2155M1970 2148H2005M1998 2178H2018M2065 2269H2105M2465 1867H2490M2420 1838H2440M2510 1898H2525M2575 1875H2610M2570 1913H2600M2535 1935H2560M2555 2050H2575M2630 1807H2645";

const railway =
  "M3019 800Q2940 890 2860 930L2770 952Q2750 980 2720 1060 2700 1108 2650 1108H2379L2210 1140 2185 1300Q2185 1400 2120 1405M2020 1590V1920";

const stations = [
  [2289, 1128],
  [2569, 1105],
  [2180, 1318],
  [2019, 1644],
];

const tracks = [
  "M1597 505L2011 733 2087 998 1040 2183 960 2280",
  "M2077 1465L2084 1618 2239 1883 2261 2003 2269 2288 1519 2272 1100 2262 930 2240",
  "M2244 1886L1100 2176 860 2230",
  "M2240 1890L1560 2076 990 2240 690 2251",
  "M2204 1978L1568 2110 1300 2175 1000 2250 690 2251",
  "M2204 1978L1568 2122 1100 2225",
  "M2287 2371L1519 2308 1100 2280 860 2230",
  "M2287 2371L2094 2578 1644 2608 820 2278 690 2251",
  "M2359 2471L2331 2573 1794 2613 1568 2533 1220 2333 1160 2273 1060 2243",
  "M2094 2578L1794 2605 1568 2553 820 2278",
  "M680 2113L730 2283 860 2268 930 2240",
  "M685 2138L1190 2335 1150 2273 1060 2238 940 2250",
  "M720 2193L1050 2333 1210 2338",
  "M1644 2608L1500 2520 1200 2330",
  "M820 2265L1060 2320M900 2260L1150 2290",
];

const gaps = [
  "M2077 1465L1070 2193",
  "M690 2138L2287 2371",
  "M860 2225L2287 2371",
  "M880 2233L2359 2471",
  "M690 2158L1050 2325M1310 2368L2094 2578",
  "M1375 2353L2094 2578",
  "M2204 1978L1300 2178 760 2260",
  "M2204 1978L1519 2130 900 2270",
  "M2235 1888L1200 2343",
  "M683 2118L730 2240",
  "M690 2200L1300 2290",
];

type Label = { x: number; y: number; text: string; size?: number; anchor?: "start" | "middle" | "end" };

const places: Label[] = [
  { x: 585, y: 147, text: "Yarrow Point" },
  { x: 579, y: 339, text: "Clyde Hill" },
  { x: 506, y: 482, text: "Medina" },
  { x: 142, y: 285, text: "ison Park", size: 32, anchor: "end" },
  { x: 65, y: 372, text: "gton", size: 32, anchor: "end" },
  { x: 6, y: 412, text: "k", size: 32, anchor: "end" },
  { x: 17, y: 493, text: "y", size: 32, anchor: "end" },
  { x: 9, y: 583, text: "a", size: 32, anchor: "end" },
  { x: 805, y: 563, text: "Bellevue", size: 42 },
  { x: 93, y: 821, text: "Homer" },
  { x: 93, y: 858, text: "M. Hadley" },
  { x: 93, y: 894, text: "Memorial" },
  { x: 93, y: 931, text: "Bridge" },
  { x: 495, y: 1054, text: "Mercer Island", size: 39 },
  { x: 739, y: 917, text: "Beaux Arts" },
  { x: 739, y: 955, text: "Village" },
  { x: 1196, y: 1062, text: "Ea", anchor: "start" },
];

const exits: Label[] = [
  { x: 854, y: 270, text: "14" },
  { x: 838, y: 459, text: "14" },
  { x: 858, y: 674, text: "12" },
  { x: 913, y: 757, text: "12" },
  { x: 901, y: 882, text: "11" },
  { x: 927, y: 1006, text: "10B" },
  { x: 835, y: 1018, text: "10A" },
  { x: 770, y: 1002, text: "9" },
  { x: 727, y: 1022, text: "8" },
  { x: 635, y: 1028, text: "8" },
  { x: 1041, y: 1000, text: "10" },
  { x: 1133, y: 1012, text: "11A" },
  { x: 949, y: 1082, text: "11" },
  { x: 259, y: 888, text: "6" },
  { x: 518, y: 941, text: "7" },
];

const MapLabel = styled.text`
  font-family: "Noto Sans", sans-serif;
  paint-order: stroke;
  stroke: rgba(255, 255, 255, 0.75);
  stroke-width: 5px;
  stroke-linejoin: round;
  fill: #3a3a3a;
  font-weight: 500;
`;

const ExitLabel = styled(MapLabel)`
  fill: #b0293a;
  font-style: italic;
`;

const survey = "translate(-11 -17) scale(0.4082 0.3954)";

const LocationMap = () => (
  <MapArt viewBox="0 0 1218 1200" role="img" aria-label="Travel paths around Bellevue and Mercer Island">
    <defs>
      <clipPath id="land">
        <path d={eastShore + mercer + westLand} />
      </clipPath>
      <clipPath id="sheet">
        <rect width="1218" height="1200" />
      </clipPath>
    </defs>
    <g clipPath="url(#sheet)">
      <rect width="1218" height="1200" fill="#aad3df" />
      <g transform={survey} fill="none" strokeLinejoin="round" strokeLinecap="round">
        <path d={eastShore + westLand} fill="#dddddd" />
        <path d={mercer} fill="#dddddd" />
        <g clipPath="url(#land)">
          <path d={mercer} stroke="#f2efe9" strokeWidth="80" />
          <Sheet paths={beige} fill="#f2efe9" />
          <Sheet paths={lanes} stroke="#c9c7c4" strokeWidth="4" />
          <Sheet paths={forest} fill="#add19e" />
          <Sheet paths={mint} fill="#c8facc" />
          <Sheet paths={golf} fill="#def6c0" />
          <Sheet paths={marsh} fill="#cdebb0" />
          <Sheet paths={sport} fill="#88e0be" />
        </g>
        <path d="M2144 43H2599V390H2254V145H2144Z" stroke="#8ac487" strokeWidth="16" />
        <path d="M2144 145H2254V390H2599V43" stroke="#7f8d80" strokeWidth="6" strokeDasharray="24 14" />
        <path d="M2366 43L2362 380" stroke="#c5e5a8" strokeWidth="9" />
        <path d="M2109 1943L2120 2080 2090 2110 1959 2090 2079 2443 2119 2553M2199 1983L2199 2243 2239 2393 2279 2523" stroke="#8fc98c" strokeWidth="16" opacity="0.8" />
        <path d="M2185 945H2240V1030L2250 1060 2220 1070 2185 1060Z" fill="#a9a9a9" />
        <path d="M2212 950H2230L2225 1020 2238 1050 2205 1065 2212 1020Z" fill="#ecd8e2" />
        <ellipse cx="2226" cy="1250" rx="34" ry="34" fill="#aad3df" />
        <path d="M1700 1470H1770V1520H1700Z" fill="#b5e3c0" />
        <ellipse cx="1735" cy="1494" rx="38" ry="26" fill="#aad3df" />
        <path d="M1265 1130H1285V1170L1268 1180ZM1482 710H1492L1488 748ZM2500 90H2510V125H2502Z" fill="#aad3df" />
        <path d={creeks} stroke="#aad3df" strokeWidth="10" />
        <path d={wetDashes} stroke="#3f9ee8" strokeWidth="7" strokeLinecap="butt" />
        <path d="M2616 1735L2640 1740 2625 1820 2610 1830Z" fill="#efd0a6" />
        <Sheet paths={streets} stroke="#c3c1be" strokeWidth="14" />
        <Sheet paths={streets} stroke="#fff" strokeWidth="10" />
        <path d={railway} stroke="#9b9b9b" strokeWidth="8" />
        <Sheet paths={avenues} stroke="#d3d68a" strokeWidth="27" strokeLinecap="butt" />
        <Sheet paths={avenues} stroke="#f7fabf" strokeWidth="20" />
        <Sheet paths={motorways} stroke="#dc7b8f" strokeWidth="38" strokeLinecap="butt" />
        <Sheet paths={motorways} stroke="#e892a2" strokeWidth="33" />
        <path d="M2049 1300Q2079 1270 2119 1305V1325H2044ZM2044 1360H2119L2090 1400H2044Z" fill="#e892a2" />
        <circle cx="1887" cy="612" r="14" stroke="#e892a2" strokeWidth="8" />
        <path d="M1500 530L1519 505 1568 490M1370 710L1440 640" stroke="#fff" strokeWidth="9" strokeDasharray="10 16" />
        <Sheet paths={boundaries} stroke="#9c6fa5" strokeWidth="9" strokeDasharray="30 14 8 14 8 14" strokeLinecap="butt" opacity="0.65" />
        {stations.map(([x, y]) => (
          <rect key={x} x={x - 14} y={y - 14} width="28" height="28" fill="#7781b1" />
        ))}
        <path d="M952 2461L980 2508H925Z" fill="#d08f55" />
        <circle cx="2255" cy="2922" r="12" fill="#f3c08a" />
      </g>
      {places.map((l) => (
        <MapLabel key={l.text} x={l.x} y={l.y} fontSize={l.size ?? 29} textAnchor={l.anchor ?? "middle"}>
          {l.text}
        </MapLabel>
      ))}
      {exits.map((l) => (
        <ExitLabel key={`${l.x}-${l.y}`} x={l.x} y={l.y} fontSize={28} textAnchor="middle">
          {l.text}
        </ExitLabel>
      ))}
      <g transform={survey} fill="none" strokeLinejoin="round" strokeLinecap="round">
        <g stroke="#3b82f6" strokeWidth="22" opacity="0.9">
          {tracks.map((d) => (
            <path key={d} d={d} />
          ))}
        </g>
        <g stroke="#6b7280" strokeWidth="14" strokeDasharray="52 96" opacity="0.7">
          {gaps.map((d) => (
            <path key={d} d={d} />
          ))}
        </g>
      </g>
    </g>
  </MapArt>
);

/* ---------- page ---------- */

export default function App() {
  return (
    <Screen>
      <Global />
      <StatusBar>
        <StatusGroup $gap={14}>
          <Clock>12:49</Clock>
          <Locator />
        </StatusGroup>
        <StatusGroup $gap={22}>
          <Signal />
          <Network>
            5G
            <NetworkStack>
              <span>U</span>
              <span>W</span>
            </NetworkStack>
          </Network>
          <Battery>
            <BatteryBody>73</BatteryBody>
          </Battery>
        </StatusGroup>
      </StatusBar>

      <NavBar>
        <NavSide>
          <NavButton aria-label="Back">
            <Back />
          </NavButton>
          <Publish>
            <PublishIcon>
              <GlobeUp width={27} height={36} />
            </PublishIcon>
            Publish
          </Publish>
        </NavSide>
        <NavTitle>
          <Monitor width={45} height={42} />
          Preview
        </NavTitle>
        <NavSide $end>
          <NavButton aria-label="Tabs">
            <Duplicate />
          </NavButton>
          <NavButton aria-label="More">
            <Dots />
          </NavButton>
        </NavSide>
      </NavBar>

      <AddressBar onSubmit={(e) => e.preventDefault()}>
        <AddressButton type="button" aria-label="Go back">
          <ArrowLeft size={50} strokeWidth={1.2} />
        </AddressButton>
        <AddressButton type="button" aria-label="Go forward">
          <ArrowRight size={50} strokeWidth={1.2} />
        </AddressButton>
        <AddressButton type="button" $dark aria-label="Reload">
          <Reload />
        </AddressButton>
        <AddressField>
          <AddressInput aria-label="Path" defaultValue="/" />
          <AddressButton aria-label="Go">
            <ArrowRight size={38} strokeWidth={1.3} />
          </AddressButton>
        </AddressField>
        <OpenButton type="button" aria-label="Open in new tab">
          <OpenOut />
        </OpenButton>
      </AddressBar>

      <Preview>
        <SiteHeader>
          <Brand>
            <MapPin size={30} />
            <BrandName>Location History Analyzer</BrandName>
          </Brand>
          <Welcome>Welcome, Tom</Welcome>
          <ButtonRow>
            <Button $tone="outline">
              <Shield size={48} />
              Admin Panel
            </Button>
            <Button $tone="ghost" $width={108} aria-label="Theme">
              <Sun size={48} />
            </Button>
            <Button $tone="outline">Logout</Button>
          </ButtonRow>
        </SiteHeader>

        <Toolbar>
          <BadgeRow $gap={36}>
            <Badge $tone="soft">3,745 points</Badge>
            <Badge $tone="outline">8/1/2025 - 8/16/2025</Badge>
          </BadgeRow>
          <ButtonRow>
            <Button $tone="outline" $width={126} aria-label="Pick dates">
              <CalendarDays size={48} />
            </Button>
            <Button $tone="ghost" $width={126} aria-label="Upload">
              <Upload size={48} />
            </Button>
            <Button $tone="accent" $width={126} aria-label="Map view">
              <MapPin size={48} />
            </Button>
            <Button $tone="ghost" $width={126} aria-label="Chart view">
              <ChartColumn size={48} />
            </Button>
          </ButtonRow>
        </Toolbar>

        <Content>
          <MapFrame>
            <LocationMap />
            <ZoomControl>
              <ZoomButton aria-label="Zoom in">+</ZoomButton>
              <ZoomButton aria-label="Zoom out">−</ZoomButton>
            </ZoomControl>
            <Attribution>
              <Flag viewBox="0 0 12 8">
                <path fill="#4c7be1" d="M0 0h12v4H0z" />
                <path fill="#ffd500" d="M0 4h12v3H0z" />
                <path fill="#e0bc00" d="M0 7h12v1H0z" />
              </Flag>
              <span>
                <a href="#leaflet">Leaflet</a> | © <a href="#osm">OpenStreetMap</a> contributors
              </span>
            </Attribution>
          </MapFrame>

          <DayCard>
            <Button $tone="outline" $width={126} aria-label="Previous day">
              <ChevronLeft size={48} />
            </Button>
            <DayInfo>
              <DayTitle>
                <Calendar size={48} />
                Saturday, August 16, 2025
              </DayTitle>
              <BadgeRow $gap={24}>
                <Badge $tone="accent">71 locations</Badge>
                <Badge $tone="outline">Data available</Badge>
              </BadgeRow>
            </DayInfo>
            <Button $tone="outline" $width={126} disabled aria-label="Next day">
              <ChevronRight size={48} />
            </Button>
          </DayCard>
        </Content>

        <FloatingSwitch>
          <Button $tone="accent" $width={126} aria-label="Show map">
            <MapPin size={48} />
          </Button>
          <Button $tone="ghost" $width={126} aria-label="Show charts">
            <ChartColumn size={48} />
          </Button>
        </FloatingSwitch>
      </Preview>

      <Dock>
        <DockRow>
          <DockButton $filled aria-label="Stop">
            <StopSquare />
          </DockButton>
          <DockGroup>
            <DockButton $active aria-label="Preview">
              <Monitor width={64} height={60} />
            </DockButton>
            <DockButton aria-label="Agent">
              <Mesh />
            </DockButton>
            <DockButton aria-label="Publish">
              <GlobeUp width={54} height={72} />
            </DockButton>
            <DockDivider />
            <DockButton aria-label="Console">
              <Prompt />
            </DockButton>
            <DockButton aria-label="Secrets">
              <Padlock />
            </DockButton>
          </DockGroup>
          <DockButton aria-label="Open panes">
            <Stack />
          </DockButton>
        </DockRow>
        <HomeBar />
      </Dock>
    </Screen>
  );
}
